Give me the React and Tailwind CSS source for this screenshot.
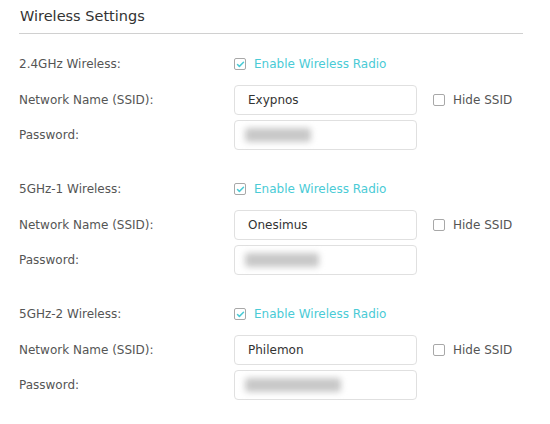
import { Check } from "lucide-react";

const bands = [
  { label: "2.4GHz Wireless:", ssid: "Exypnos", blur: "w-[66px]" },
  { label: "5GHz-1 Wireless:", ssid: "Onesimus", blur: "w-[74px]" },
  { label: "5GHz-2 Wireless:", ssid: "Philemon", blur: "w-[96px]" },
];

const Box = ({ checked }) => (
  <span className="flex h-[12px] w-[12px] items-center justify-center rounded-[2px] border border-[#a8a8a8] bg-white">
    {checked && <Check size={9} strokeWidth={4} className="text-[#4acbd6]" />}
  </span>
);

const Band = ({ label, ssid, blur }) => (
  <div className="grid grid-cols-[215px_183px_auto] gap-y-[5px]">
    <div className="flex h-[20px] items-center">{label}</div>
    <div className="col-span-2 flex h-[20px] items-center gap-[8px] text-[#4acbd6]">
      <Box checked />
      <span>Enable Wireless Radio</span>
    </div>

    <div className="mt-[6px] flex h-[30px] items-center">Network Name (SSID):</div>
    <div className="mt-[6px] flex h-[30px] items-center rounded-[4px] border border-[#e0e0e0] pl-[13px] text-[#333]">
      {ssid}
    </div>
    <div className="mt-[6px] flex h-[30px] items-center gap-[8px] pl-[16px]">
      <Box />
      <span>Hide SSID</span>
    </div>

    <div className="flex h-[30px] items-center">Password:</div>
    <div className="flex h-[30px] items-center rounded-[4px] border border-[#e0e0e0] pl-[10px]">
      <div className={`h-[14px] ${blur} rounded-[3px] bg-[#c8c8c8] blur-[3px]`} />
    </div>
    <div />
  </div>
);

export default function App() {
  return (
    <div className="h-[424px] w-[550px] bg-white px-[19px] font-['DejaVu_Sans',Verdana,sans-serif] text-[12px] text-[#555]">
      <div className="flex h-[34px] w-[504px] items-center border-b border-[#d0d0d0] pl-px pt-[1px] text-[14.5px] text-[#333]">
        Wireless Settings
      </div>
      <div className="flex flex-col gap-[29px] pt-[20px]">
        {bands.map((b) => (
          <Band key={b.label} {...b} />
        ))}
      </div>
    </div>
  );
}
